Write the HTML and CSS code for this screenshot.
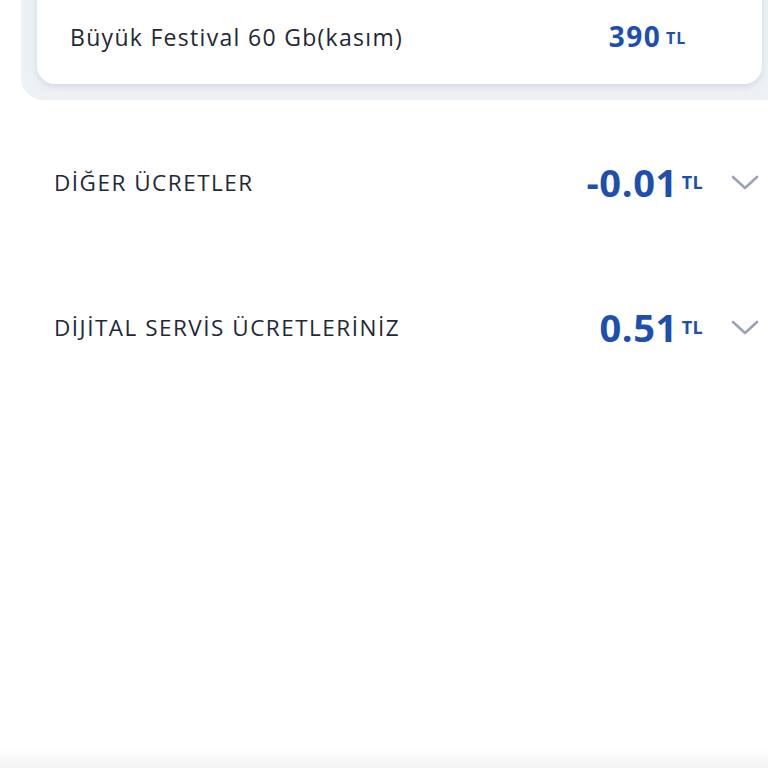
FILE: index.html
```html
<!DOCTYPE html>
<html lang="tr">
<head>
  <meta charset="UTF-8">
  <meta name="viewport" content="width=device-width, initial-scale=1">
  <title>Fatura Detayı</title>
  <link rel="stylesheet" href="styles.css">
</head>
<body>
  <div class="panel">
    <div class="card">
      <div class="card-row">
        <span class="item-name">Büyük Festival 60 Gb(kasım)</span>
        <span class="price"><span class="price-num">390</span><span class="price-cur">TL</span></span>
      </div>
    </div>
  </div>

  <ul class="fees">
    <li class="fee">
      <span class="fee-title">DİĞER ÜCRETLER</span>
      <span class="fee-amount"><span class="amount-num">-0.01</span><span class="amount-cur">TL</span></span>
      <svg class="chevron" width="28" height="16" viewBox="0 0 28 16"><path d="M2 2 L14 13 L26 2" fill="none" stroke="#9aa3b8" stroke-width="2.6" stroke-linecap="round" stroke-linejoin="round"/></svg>
    </li>
    <li class="fee">
      <span class="fee-title">DİJİTAL SERVİS ÜCRETLERİNİZ</span>
      <span class="fee-amount"><span class="amount-num">0.51</span><span class="amount-cur">TL</span></span>
      <svg class="chevron" width="28" height="16" viewBox="0 0 28 16"><path d="M2 2 L14 13 L26 2" fill="none" stroke="#9aa3b8" stroke-width="2.6" stroke-linecap="round" stroke-linejoin="round"/></svg>
    </li>
  </ul>

  <div class="bottom-fade"></div>
</body>
</html>
```

FILE: styles.css
```css
html, body { margin: 0; height: 100%; }
body { font-family: "Open Sans", "Noto Sans", sans-serif; background: #fff; color: #1e2836; overflow: hidden; position: relative; }

.panel { margin: -40px 0 0 21px; background: #eef1f4; border-radius: 0 0 0 22px; padding: 0 6px 16px 16px; }
.card { background: #fff; border-radius: 0 0 18px 18px; box-shadow: 0 3px 6px rgba(40, 60, 90, 0.12); height: 124px; display: flex; align-items: flex-end; }
.card-row { flex: 1; display: flex; justify-content: space-between; align-items: center; padding: 0 76px 30px 33px; }
.item-name { font-size: 23px; font-weight: 500; letter-spacing: 1.3px; }
.price { display: flex; align-items: flex-start; color: #1c4fae; font-weight: 700; }
.price-num { font-size: 28px; letter-spacing: 1.4px; line-height: 1.2; }
.price-cur { font-size: 16px; margin: 7px 0 0 5px; letter-spacing: 0.8px; }

.fees { list-style: none; margin: 10px 0 0; padding: 0; }
.fee { display: flex; align-items: center; height: 145px; padding: 0 9px 0 54px; }
.fee-title { flex: 1; font-size: 22.5px; font-weight: 500; letter-spacing: 1.5px; }
.fee-amount { display: flex; align-items: flex-start; color: #1c4fae; font-weight: 700; }
.amount-num { font-size: 38px; letter-spacing: 0.6px; line-height: 1.2; }
.amount-cur { font-size: 18px; margin: 10px 0 0 4px; letter-spacing: 0.3px; }
.chevron { margin-left: 28px; }

.bottom-fade { position: absolute; left: 0; right: 0; bottom: 0; height: 20px; background: linear-gradient(#fff, #f3f3f3); }
```
